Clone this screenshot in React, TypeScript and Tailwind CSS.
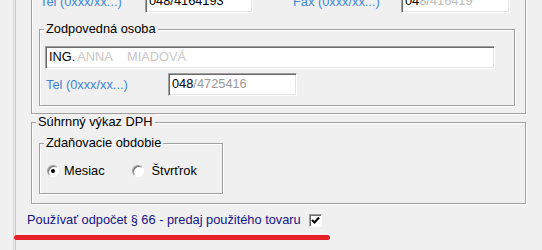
import React from "react";

const inputCls =
  "h-[23px] bg-white border border-t-[#a0a0a0] border-l-[#a0a0a0] border-r-white border-b-white shadow-[inset_1px_1px_0_#696969,inset_-1px_-1px_0_#e3e3e3] px-[3px] flex items-center text-black text-[12.8px] leading-none whitespace-nowrap overflow-hidden";

function Group({
  label,
  className,
  children,
}: {
  label: string;
  className: string;
  children: React.ReactNode;
}) {
  return (
    <div
      className={
        "relative border border-[#a0a0a0] shadow-[inset_1px_1px_0_#ffffff,1px_1px_0_#ffffff] " +
        className
      }
    >
      <div className="absolute left-[4px] top-[-9px] px-[2px] bg-[#f0f0f0] leading-[15px] text-black whitespace-nowrap">
        {label}
      </div>
      {children}
    </div>
  );
}

function Radio({ checked }: { checked?: boolean }) {
  return (
    <div className="w-[12px] h-[12px] rounded-full bg-white border border-t-[#a0a0a0] border-l-[#a0a0a0] border-r-white border-b-white shadow-[inset_1px_1px_0_#696969] flex items-center justify-center shrink-0">
      {checked && <div className="w-[4px] h-[4px] rounded-full bg-black" />}
    </div>
  );
}

export default function App() {
  return (
    <div className="w-[542px] h-[250px] bg-[#f0f0f0] overflow-hidden relative font-['Liberation_Sans',Arial,sans-serif] text-[12.8px]">
      <div className="h-full ml-[13px] border-l border-[#d6d6d6] pl-[1px]">
        <div className="h-full border-l border-[#c4c4c4] pl-[11px] flex flex-col">
          {/* Group 1 */}
          <div className="-mt-[31px] ml-[4px] w-[495px] border border-[#a0a0a0] shadow-[inset_1px_1px_0_#ffffff,1px_1px_0_#ffffff] pt-[20px] pb-[7px]">
            <div className="flex items-center pl-[8px] h-[23px]">
              <div className="w-[105px] text-[#3f86d8] whitespace-nowrap">Tel (0xxx/xx...)</div>
              <div className={inputCls + " w-[108px]"}>048/4164193</div>
              <div className="ml-[40px] w-[108px] text-[#3f86d8] whitespace-nowrap">Fax (0xxx/xx...)</div>
              <div className={inputCls + " w-[109px]"}>
                04<span className="text-[#bbbbbb]">8/416419</span>
              </div>
            </div>
            <Group label="Zodpovedná osoba" className="mt-[16px] ml-[7px] w-[476px] pt-[16px] pl-[5px] pb-[9px]">
              <div className={inputCls + " w-[450px]"}>
                ING.<span className="text-[#c8c8c8] ml-[2px]">ANNA&nbsp;&nbsp;&nbsp;&nbsp;MIADOVÁ</span>
              </div>
              <div className="flex items-center mt-[4px] pl-[1px]">
                <div className="w-[122px] text-[#3f86d8] whitespace-nowrap">Tel (0xxx/xx...)</div>
                <div className={inputCls + " w-[129px]"}>
                  048<span className="text-[#9a9a9a]">/4725416</span>
                </div>
              </div>
            </Group>
          </div>

          {/* Group 2 */}
          <Group label="Súhrnný výkaz DPH" className="mt-[8px] ml-[4px] w-[495px] pt-[20px] pl-[7px] pb-[9px]">
            <Group label="Zdaňovacie obdobie" className="w-[184px] h-[51px] pt-[19px] pl-[7px]">
              <div className="flex items-center h-[16px]">
                <Radio checked />
                <span className="ml-[5px] text-black">Mesiac</span>
                <div className="ml-[27px]">
                  <Radio />
                </div>
                <span className="ml-[8px] text-black">Štvrťrok</span>
              </div>
            </Group>
          </Group>

          <div className="mt-[8px] flex items-center h-[16px]">
            <span className="text-[#141488] whitespace-nowrap">
              Používať odpočet § 66 - predaj použitého tovaru
            </span>
            <div className="ml-[8px] w-[13px] h-[13px] bg-white border border-t-[#a0a0a0] border-l-[#a0a0a0] border-r-white border-b-white shadow-[inset_1px_1px_0_#696969] flex items-center justify-center">
              <svg width="9" height="9" viewBox="0 0 9 9">
                <path d="M1 4 L3.5 6.5 L8 1.5" stroke="black" strokeWidth="2" fill="none" />
              </svg>
            </div>
          </div>
        </div>
      </div>
      <div className="absolute left-[14px] top-[235px] w-[316px] h-[5px] rounded-full bg-[#e42129]" />
    </div>
  );
}
